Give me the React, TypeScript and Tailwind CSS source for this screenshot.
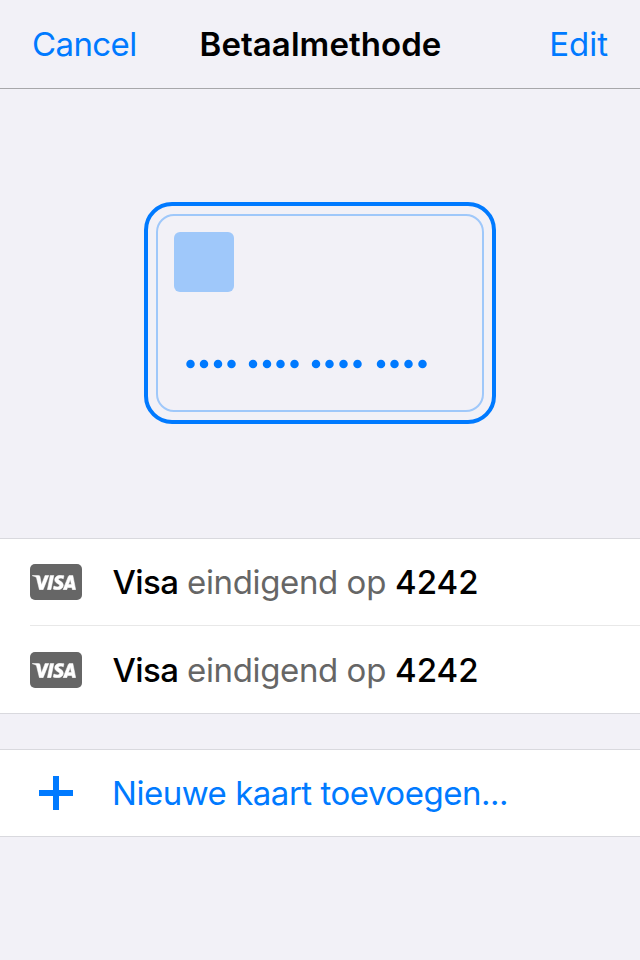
const dots = [190.5, 204, 218, 231.5, 253, 267, 280.5, 294.5, 316, 329.5, 343.5, 357.5, 381, 394.5, 408.5, 422.5];

function VisaBadge() {
  return (
    <div className="flex h-9 w-[52px] shrink-0 items-center rounded-[5px] bg-[#666666] pl-[2px] pt-[1px]">
      <svg
        width="44"
        height="15"
        viewBox="-0.2 8.05 24.4 7.9"
        preserveAspectRatio="none"
        fill="#fff"
        stroke="#fff"
        strokeWidth="0.3"
        aria-label="Visa logo"
      >
        <path d="M9.112 8.262L5.97 15.758H3.92L2.374 9.775c-.094-.368-.175-.503-.461-.658C1.447 8.864.677 8.627 0 8.479l.046-.217h3.3a.904.904 0 01.894.764l.817 4.338 2.018-5.102zm8.033 5.049c.008-1.979-2.736-2.088-2.717-2.972.006-.269.262-.555.822-.628a3.66 3.66 0 011.913.336l.34-1.59a5.207 5.207 0 00-1.814-.333c-1.917 0-3.266 1.02-3.278 2.479-.012 1.079.963 1.68 1.698 2.04.756.367 1.01.603 1.006.931-.005.504-.602.725-1.16.734-.975.015-1.54-.263-1.992-.473l-.351 1.642c.453.208 1.289.39 2.156.398 2.037 0 3.37-1.006 3.377-2.564m5.061 2.447H24l-1.565-7.496h-1.656a.883.883 0 00-.826.55l-2.909 6.946h2.036l.405-1.12h2.488zm-2.163-2.656l1.02-2.815.588 2.815zm-8.16-4.84l-1.603 7.496H8.34l1.605-7.496z" />
      </svg>
    </div>
  );
}

function CardLabel() {
  return (
    <div className="ml-[30.5px] flex whitespace-pre text-[33px] leading-[40px]">
      <span className="w-[74.5px] font-medium tracking-[-0.6px]">Visa</span>
      <span className="w-[159.5px] text-[#666666] tracking-[-0.35px]">eindigend</span>
      <span className="w-[48.5px] text-[#666666]">op</span>
      <span className="font-medium">4242</span>
    </div>
  );
}

export default function App() {
  return (
    <div className="flex h-[960px] w-[640px] flex-col overflow-hidden bg-[#f2f1f7] font-['Inter',sans-serif] text-black">
      <header className="grid h-[89px] grid-cols-[168px_1fr_168px] items-center whitespace-nowrap border-b border-[#a7a7aa] text-[33px] leading-[40px]">
        <button className="pl-[32px] text-left tracking-[-0.6px] text-[#007aff]">Cancel</button>
        <h1 className="pl-[1px] text-center font-semibold tracking-[0.07px]">Betaalmethode</h1>
        <button className="pr-[32px] text-right text-[#007aff]">Edit</button>
      </header>

      <section className="flex h-[449px] justify-center pt-[113px]">
        <div className="h-[222px] w-[352px] rounded-[28px] border-4 border-[#007aff] p-2">
          <div className="h-[198px] w-[328px] rounded-[18px] border-2 border-[#9fc8fa] pl-4 pt-4">
            <div className="h-[60px] w-[60px] rounded-[6px] bg-[#9fc8fa]" />
            <svg className="mt-[66px]" width="260" height="12" viewBox="174 358 260 12" fill="#007aff">
              {dots.map((x) => (
                <circle key={x} cx={x} cy="364" r="4.25" />
              ))}
            </svg>
          </div>
        </div>
      </section>

      <section className="h-[176px] border-y border-[#d9d9de] bg-white">
        <div className="ml-[30px] flex h-[87px] items-center border-b border-[#e8e8e8]">
          <VisaBadge />
          <CardLabel />
        </div>
        <div className="ml-[30px] flex h-[87px] items-center">
          <VisaBadge />
          <CardLabel />
        </div>
      </section>

      <button className="mt-[35px] flex h-[88px] items-center border-y border-[#d9d9de] bg-white pl-[39px] text-[#007aff]">
        <svg width="34" height="34" viewBox="0 0 34 34" fill="#007aff">
          <path d="M14 0h6v14h14v6H20v14h-6V20H0v-6h14z" />
        </svg>
        <span className="ml-[39px] text-[33px] leading-[40px] tracking-[-0.48px]">Nieuwe kaart toevoegen...</span>
      </button>
    </div>
  );
}
